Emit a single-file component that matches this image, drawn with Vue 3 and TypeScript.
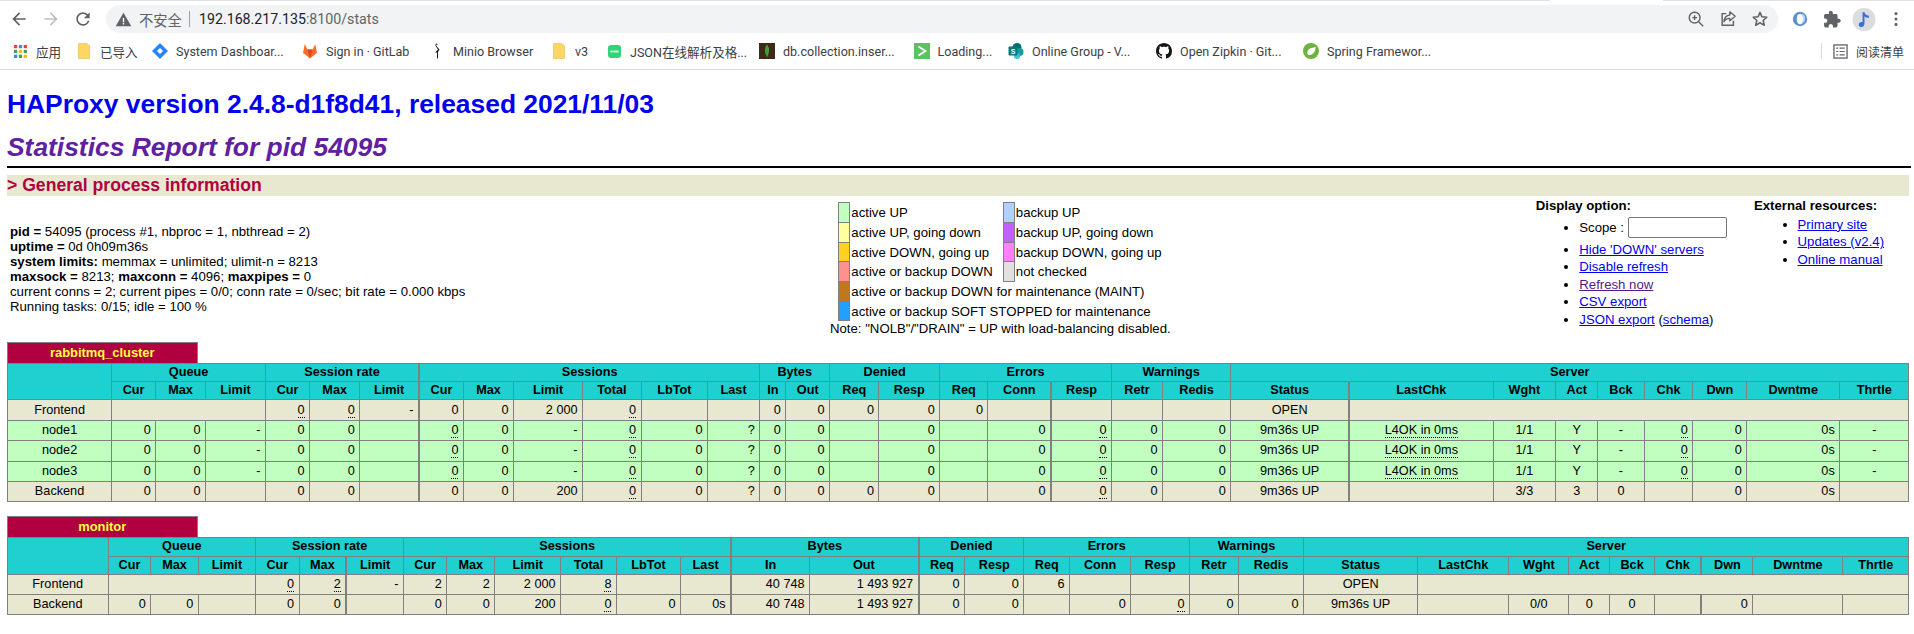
<script setup lang="ts">
interface Cell { text: string; u: boolean; center: boolean; span: number; thick: boolean }
interface Bookmark { label: string; icon: string; start: number }

const bookmarkData: Bookmark[] = [
  { label: '应用', icon: 'apps', start: 12 },
  { label: '已导入', icon: 'folder', start: 76 },
  { label: 'System Dashboar...', icon: 'jira', start: 152 },
  { label: 'Sign in · GitLab', icon: 'gitlab', start: 302 },
  { label: 'Minio Browser', icon: 'minio', start: 429 },
  { label: 'v3', icon: 'folder', start: 551 },
  { label: 'JSON在线解析及格...', icon: 'json', start: 606 },
  { label: 'db.collection.inser...', icon: 'mongo', start: 759 },
  { label: 'Loading...', icon: 'loading', start: 913.5 },
  { label: 'Online Group - V...', icon: 'share', start: 1008 },
  { label: 'Open Zipkin · Git...', icon: 'github', start: 1156 },
  { label: 'Spring Framewor...', icon: 'spring', start: 1303 }
]
const barEnd = 1821
const bookmarks = bookmarkData.map((b, i) => ({
  ...b,
  width: (i + 1 < bookmarkData.length ? bookmarkData[i + 1].start : barEnd) - b.start
}))

const groups: [string, number][] = [
  ['Queue', 3], ['Session rate', 3], ['Sessions', 6], ['Bytes', 2],
  ['Denied', 2], ['Errors', 3], ['Warnings', 2], ['Server', 9]
]
const subHeads = ['Cur', 'Max', 'Limit', 'Cur', 'Max', 'Limit', 'Cur', 'Max', 'Limit', 'Total', 'LbTot', 'Last',
  'In', 'Out', 'Req', 'Resp', 'Req', 'Conn', 'Resp', 'Retr', 'Redis', 'Status', 'LastChk', 'Wght', 'Act', 'Bck', 'Chk', 'Dwn', 'Dwntme', 'Thrtle']

function cell(token: string, col: number, thick: number[]): Cell {
  let text = token
  let u = false
  let center = false
  let span = 1
  if (token.startsWith('u:')) { u = true; text = token.slice(2) }
  else if (token.startsWith('c:')) { center = true; text = token.slice(2) }
  else if (token.startsWith('cu:')) { center = true; u = true; text = token.slice(3) }
  else if (token.startsWith('s')) { span = Number(token.slice(1)); text = '' }
  return { text, u, center, span, thick: thick.includes(col) }
}
function parseRow(tokens: string[], thick: number[]): Cell[] {
  let col = 0
  return tokens.map((t) => {
    const c = cell(t, col, thick)
    col += c.span
    return c
  })
}
function headCols(thick: number[]) {
  let col = 1
  const top = groups.map(([name, span]) => {
    const r = { name, span, thick: thick.includes(col) }
    col += span
    return r
  })
  const sub = subHeads.map((name, i) => ({ name, thick: thick.includes(i + 1) }))
  return { top, sub }
}
function widths(b: number[]): number[] {
  return b.slice(1).map((x, i) => x - b[i])
}

const node = (n: string) => ['c:' + n, '0', '0', '-', '0', '0', '', 'u:0', '0', '-', 'u:0', '0', '?', '0', '0', '', '0', '', '0', 'u:0', '0', '0',
  'c:9m36s UP', 'cu:L4OK in 0ms', 'c:1/1', 'c:Y', 'c:-', 'u:0', '0', '0s', 'c:-']

function buildTable(title: string, bounds: number[], thick: number[], raw: { cls: string; cells: string[] }[]) {
  return {
    title,
    cols: widths(bounds),
    width: bounds[bounds.length - 1] - bounds[0],
    head: headCols(thick),
    rows: raw.map((r) => ({ cls: r.cls, cells: parseRow(r.cells, thick) }))
  }
}

const tables = [
  buildTable('rabbitmq_cluster',
    [7.3, 111.4, 155.5, 205.3, 265.3, 309.4, 359.6, 418.8, 463.3, 513.5, 582.4, 641, 707.3, 759.6, 785.7, 829.4, 878.8, 939.6, 987.8, 1051, 1111.4, 1162.4, 1230.6, 1349, 1493, 1555.6, 1597.7, 1644, 1692.8, 1746.7, 1839.7, 1908.7],
    [7, 19, 23],
    [
      { cls: 'fe', cells: ['c:Frontend', 's3', 'u:0', 'u:0', '-', '0', '0', '2 000', 'u:0', '', '', '0', '0', '0', '0', '0', '', '', '', '', 'c:OPEN', 's8'] },
      { cls: 'up', cells: node('node1') },
      { cls: 'up', cells: node('node2') },
      { cls: 'up', cells: node('node3') },
      { cls: 'fe', cells: ['c:Backend', '0', '0', '', '0', '0', '', '0', '0', '200', 'u:0', '0', '?', '0', '0', '0', '0', '', '0', 'u:0', '0', '0', 'c:9m36s UP', '', 'c:3/3', 'c:3', 'c:0', '', '0', '0s', ''] }
    ]),
  buildTable('monitor',
    [7.3, 107.8, 150.6, 198, 255.5, 298.8, 346, 403.3, 446.5, 494.7, 560.4, 616.3, 680.4, 731, 809.4, 918.4, 964.5, 1023.7, 1069.4, 1130.6, 1189.4, 1238.4, 1303.4, 1417.7, 1508.7, 1568.7, 1609.5, 1654.4, 1701.3, 1752.8, 1842.6, 1908.7],
    [6, 13, 15, 28],
    [
      { cls: 'fe', cells: ['c:Frontend', 's3', 'u:0', 'u:2', '-', '2', '2', '2 000', 'u:8', '', '', '40 748', '1 493 927', '0', '0', '6', '', '', '', '', 'c:OPEN', 's8'] },
      { cls: 'fe', cells: ['c:Backend', '0', '0', '', '0', '0', '', '0', '0', '200', 'u:0', '0', '0s', '40 748', '1 493 927', '0', '0', '', '0', 'u:0', '0', '0', 'c:9m36s UP', '', 'c:0/0', 'c:0', 'c:0', '', '0', '', ''] }
    ])
]

const legendPairs = [
  ['#c0ffc0', 'active UP', '#b0d0ff', 'backup UP'],
  ['#ffffa0', 'active UP, going down', '#c060ff', 'backup UP, going down'],
  ['#ffd020', 'active DOWN, going up', '#ff80ff', 'backup DOWN, going up'],
  ['#ff9090', 'active or backup DOWN', '#e0e0e0', 'not checked']
]
const legendWide = [
  ['#c07820', 'active or backup DOWN for maintenance (MAINT)'],
  ['#20a0ff', 'active or backup SOFT STOPPED for maintenance']
]
</script>

<template>
  <div class="browser">
    <div class="tabstrip"><div class="strip-a"></div><div class="strip-tab"></div><div class="strip-b"></div></div>
    <header class="toolbar">
      <button class="nav" type="button" aria-label="back">
        <svg viewBox="0 0 24 24" width="20" height="20"><path fill="#5f6368" d="M20 11H7.83l5.59-5.59L12 4l-8 8 8 8 1.41-1.41L7.83 13H20v-2z"/></svg>
      </button>
      <button class="nav" type="button" aria-label="forward">
        <svg viewBox="0 0 24 24" width="20" height="20"><path fill="#bdc1c6" d="M4 11h12.17l-5.59-5.59L12 4l8 8-8 8-1.41-1.41L16.17 13H4v-2z"/></svg>
      </button>
      <button class="nav" type="button" aria-label="reload">
        <svg viewBox="0 0 24 24" width="20" height="20"><path fill="#5f6368" d="M17.65 6.35A7.958 7.958 0 0012 4c-4.42 0-7.99 3.58-7.99 8s3.57 8 7.99 8c3.73 0 6.84-2.55 7.73-6h-2.08A5.99 5.99 0 0112 18c-3.31 0-6-2.69-6-6s2.69-6 6-6c1.66 0 3.14.69 4.22 1.78L13 11h7V4l-2.35 2.35z"/></svg>
      </button>
      <div class="omni">
        <svg class="warn" viewBox="0 0 24 24" width="17" height="17"><path fill="#5f6368" d="M1 21.5h22L12 2.5z"/><path fill="#fff" d="M11 10h2v6h-2zM11 17h2v2h-2z"/></svg>
        <span class="insecure">不安全</span>
        <span class="omni-sep"></span>
        <span class="url">192.168.217.135<span class="url-dim">:8100/stats</span></span>
        <span class="omni-fill"></span>
        <svg class="omni-ic" viewBox="0 0 20 20" width="18" height="18"><circle cx="8.5" cy="8.5" r="6" fill="none" stroke="#5f6368" stroke-width="1.6"/><path d="M13 13l5 5M8.5 5.8v5.4M5.8 8.5h5.4" fill="none" stroke="#5f6368" stroke-width="1.6"/></svg>
        <svg class="omni-ic" viewBox="0 0 20 20" width="18" height="18"><path d="M8 4H3.5v13H16v-5" fill="none" stroke="#5f6368" stroke-width="1.6"/><path d="M12 2l6 5-6 5V9.3c-3 0-5 1-6.5 3.7C6 9 8 6 12 5.6z" fill="none" stroke="#5f6368" stroke-width="1.5" stroke-linejoin="round"/></svg>
        <svg class="omni-ic" viewBox="0 0 20 20" width="18" height="18"><path d="M10 2.6l2.2 5 5.4.5-4.1 3.6 1.3 5.3L10 14.2 5.2 17l1.3-5.3L2.4 8.1l5.4-.5z" fill="none" stroke="#5f6368" stroke-width="1.7" stroke-linejoin="round"/></svg>
      </div>
      <div class="tools">
        <svg viewBox="0 0 20 20" width="18" height="18"><circle cx="10" cy="10" r="8" fill="#5b92cf"/><ellipse cx="10" cy="10" rx="3.600" ry="5.800" fill="#fff"/><path d="M12 3.500c3 1.500 4 4 3.500 7-.4 2.500-2 4-3.500 5 1.800-3.500 2-8 0-12z" fill="#c5dbf1"/></svg>
        <svg viewBox="0 0 24 24" width="19" height="19"><path fill="#5f6368" d="M20.5 11H19V7c0-1.1-.9-2-2-2h-4V3.5C13 2.12 11.88 1 10.5 1S8 2.12 8 3.5V5H4c-1.1 0-1.99.9-1.99 2v3.8H3.5c1.49 0 2.7 1.21 2.7 2.7s-1.21 2.7-2.7 2.7H2V20c0 1.1.9 2 2 2h3.8v-1.5c0-1.49 1.21-2.7 2.7-2.7 1.49 0 2.7 1.21 2.7 2.7V22H17c1.1 0 2-.9 2-2v-4h1.5c1.38 0 2.5-1.12 2.5-2.5S21.88 11 20.5 11z"/></svg>
        <svg viewBox="0 0 24 24" width="23" height="23"><circle cx="12" cy="12" r="12" fill="#dadce0"/><path fill="#3b6fd8" d="M10.5 4.5h2c.4 2.5 2.6 3 4.5 3.5v2.4c-1.9-.3-3.3-.9-4.5-1.9v8c0 2.1-1.6 3.5-3.3 3.5S6.5 18.900 6.500 17.300c0-1.800 1.700-3 4-2.700z"/></svg>
        <svg viewBox="0 0 20 20" width="18" height="18"><circle cx="10" cy="4" r="1.700" fill="#5f6368"/><circle cx="10" cy="10" r="1.700" fill="#5f6368"/><circle cx="10" cy="16" r="1.700" fill="#5f6368"/></svg>
      </div>
    </header>

    <nav class="bookmarks">
      <div v-for="b in bookmarks" :key="b.start" class="bm" :style="{ width: b.width + 'px' }">
        <span class="bm-icon">
          <svg v-if="b.icon === 'apps'" viewBox="0 0 16 16" width="15" height="15">
            <rect x="1" y="1" width="3.500" height="3.500" fill="#ea4335"/><rect x="6.200" y="1" width="3.500" height="3.500" fill="#4285f4"/><rect x="11.400" y="1" width="3.500" height="3.500" fill="#ea4335"/>
            <rect x="1" y="6.200" width="3.500" height="3.500" fill="#34a853"/><rect x="6.200" y="6.200" width="3.500" height="3.500" fill="#fbbc04"/><rect x="11.400" y="6.200" width="3.500" height="3.500" fill="#34a853"/>
            <rect x="1" y="11.400" width="3.500" height="3.500" fill="#4285f4"/><rect x="6.200" y="11.400" width="3.500" height="3.500" fill="#34a853"/><rect x="11.400" y="11.400" width="3.500" height="3.500" fill="#fbbc04"/>
          </svg>
          <svg v-else-if="b.icon === 'folder'" viewBox="0 0 16 16" width="16" height="16"><path d="M2.500 0.500h8.500l2.500 2.500v12.500H2.500z" fill="#fdd663" stroke="#e9c46a" stroke-width="0.800"/></svg>
          <svg v-else-if="b.icon === 'jira'" viewBox="0 0 16 16" width="16" height="16"><path d="M8 0l8 8-8 8-8-8z" fill="#2684ff"/><path d="M8 5l3 3-3 3-3-3z" fill="#fff"/></svg>
          <svg v-else-if="b.icon === 'gitlab'" viewBox="0 0 16 16" width="16" height="16"><path d="M8 15.500L1 9.800 2.800 1l2.500 5.500h5.400L13.200 1 15 9.800z" fill="#fc6d26"/><path d="M8 15.500L5.300 6.500h5.400z" fill="#e24329"/></svg>
          <svg v-else-if="b.icon === 'minio'" viewBox="0 0 16 16" width="16" height="16"><path d="M8 0.500c-1.500 0-2 1.500-1.200 2.700L9 6.500 6 9.500h2v6.300l1-0.800V9l1.500-2.500-3-3.600C7 2 7.500 1.200 8.800 1.500z" fill="#1a1a1a"/></svg>
          <svg v-else-if="b.icon === 'json'" viewBox="0 0 16 16" width="15" height="15"><rect x="1" y="1" width="14" height="14" rx="3.500" fill="#2ed47a"/><rect x="3.500" y="7" width="9" height="2" fill="#d6f8e5"/></svg>
          <svg v-else-if="b.icon === 'mongo'" viewBox="0 0 16 16" width="16" height="16"><rect width="16" height="16" fill="#3f2a18"/><path d="M8 1.500c2.600 3 3 7 0 13-3-6-2.600-10 0-13z" fill="#3fa037"/></svg>
          <svg v-else-if="b.icon === 'loading'" viewBox="0 0 16 16" width="16" height="16"><rect width="16" height="16" fill="#5cc25f"/><path d="M4.500 3.500L11.500 8l-7 4.500" fill="none" stroke="#fff" stroke-width="1.800"/></svg>
          <svg v-else-if="b.icon === 'share'" viewBox="0 0 16 16" width="16" height="16"><circle cx="9" cy="4.500" r="4.500" fill="#036c70"/><circle cx="11.500" cy="9" r="4" fill="#1a9ba1"/><circle cx="9" cy="13" r="3" fill="#37c6d0"/><rect x="0.500" y="3.500" width="9" height="9" rx="1" fill="#03787c"/><text x="5" y="11" class="bm-s">S</text></svg>
          <svg v-else-if="b.icon === 'github'" viewBox="0 0 16 16" width="16" height="16"><path fill="#161614" d="M8 0C3.580 0 0 3.580 0 8c0 3.540 2.290 6.530 5.470 7.590.4.07.55-.17.55-.38 0-.19-.01-.82-.01-1.490-2.010.37-2.530-.49-2.690-.94-.09-.23-.48-.94-.82-1.130-.28-.15-.68-.52-.01-.53.63-.01 1.080.58 1.230.82.72 1.210 1.870.87 2.330.66.07-.52.28-.87.51-1.070-1.780-.2-3.640-.89-3.640-3.950 0-.87.31-1.590.82-2.150-.08-.2-.36-1.020.08-2.120 0 0 .67-.21 2.200.82.64-.18 1.320-.27 2-.27.68 0 1.360.09 2 .27 1.530-1.040 2.200-.82 2.200-.82.44 1.100.16 1.920.08 2.120.51.56.82 1.270.82 2.150 0 3.070-1.870 3.750-3.650 3.950.29.25.54.73.54 1.480 0 1.070-.01 1.930-.01 2.200 0 .21.15.46.55.38A8.013 8.013 0 0016 8c0-4.420-3.580-8-8-8z"/></svg>
          <svg v-else viewBox="0 0 16 16" width="16" height="16"><circle cx="8" cy="8" r="8" fill="#6db33f"/><path d="M12.500 3.500C12.800 9 9.500 12.500 5 12c-1.500-3 0-6.500 3.500-7 2-.3 3.200-.5 4-1.500z" fill="#fff"/></svg>
        </span>
        <span class="bm-label">{{ b.label }}</span>
      </div>
      <span class="bm-sep"></span>
      <svg class="reader" viewBox="0 0 16 16" width="15" height="15"><rect x="1" y="1" width="14" height="14" fill="none" stroke="#5f6368" stroke-width="1.400"/><path d="M3.500 4.500h2M7 4.500h5.500M3.500 8h2M7 8h5.500M3.500 11.500h2M7 11.500h5.500" stroke="#5f6368" stroke-width="1.300"/></svg>
      <span class="reader-label">阅读清单</span>
    </nav>

    <main class="page">
      <h1>HAProxy version 2.4.8-d1f8d41, released 2021/11/03</h1>
      <h2>Statistics Report for pid 54095</h2>
      <div class="rule"></div>
      <h3>&gt; General process information</h3>

      <section class="overview">
        <div class="info">
          <p><b>pid = </b>54095 (process #1, nbproc = 1, nbthread = 2)</p>
          <p><b>uptime = </b>0d 0h09m36s</p>
          <p><b>system limits:</b> memmax = unlimited; ulimit-n = 8213</p>
          <p><b>maxsock = </b>8213; <b>maxconn = </b>4096; <b>maxpipes = </b>0</p>
          <p>current conns = 2; current pipes = 0/0; conn rate = 0/sec; bit rate = 0.000 kbps</p>
          <p>Running tasks: 0/15; idle = 100 %</p>
        </div>

        <div class="legend">
          <table class="lgd">
            <tbody>
              <tr v-for="p in legendPairs" :key="p[1]">
                <td class="sw" :style="{ background: p[0] }"></td>
                <td class="lt">{{ p[1] }}</td>
                <td class="sw" :style="{ background: p[2] }"></td>
                <td class="lt">{{ p[3] }}</td>
              </tr>
              <tr v-for="p in legendWide" :key="p[1]">
                <td class="sw" :style="{ background: p[0] }"></td>
                <td class="lt" colspan="3">{{ p[1] }}</td>
              </tr>
            </tbody>
          </table>
          <div class="note">Note: "NOLB"/"DRAIN" = UP with load-balancing disabled.</div>
        </div>

        <div class="opts">
          <b>Display option:</b>
          <ul>
            <li class="scope">Scope : <input type="text" aria-label="Scope"></li>
            <li><a href="#">Hide 'DOWN' servers</a></li>
            <li><a href="#">Disable refresh</a></li>
            <li><a href="#" class="visited">Refresh now</a></li>
            <li><a href="#">CSV export</a></li>
            <li><a href="#">JSON export</a> (<a href="#">schema</a>)</li>
          </ul>
        </div>

        <div class="ext">
          <b>External resources:</b>
          <ul>
            <li><a href="#">Primary site</a></li>
            <li><a href="#">Updates (v2.4)</a></li>
            <li><a href="#">Online manual</a></li>
          </ul>
        </div>
      </section>

      <section v-for="t in tables" :key="t.title" class="proxy">
        <div class="pxname">{{ t.title }}</div>
        <table class="tbl" :style="{ width: t.width + 'px' }">
          <colgroup><col v-for="(w, i) in t.cols" :key="i" :style="{ width: w + 'px' }"></colgroup>
          <thead>
            <tr class="h1row">
              <th rowspan="2"></th>
              <th v-for="g in t.head.top" :key="g.name" :colspan="g.span" :class="{ thick: g.thick }">{{ g.name }}</th>
            </tr>
            <tr class="h2row">
              <th v-for="(s, i) in t.head.sub" :key="i" :class="{ thick: s.thick }">{{ s.name }}</th>
            </tr>
          </thead>
          <tbody>
            <tr v-for="(r, ri) in t.rows" :key="ri" :class="r.cls">
              <td v-for="(c, ci) in r.cells" :key="ci" :colspan="c.span" :class="{ ac: c.center, thick: c.thick }">
                <u v-if="c.u">{{ c.text }}</u>
                <template v-else>{{ c.text }}</template>
              </td>
            </tr>
          </tbody>
        </table>
      </section>
    </main>
  </div>
</template>

<style scoped>
.browser { width: 1914px; height: 634px; overflow: hidden; background: #fff; font-family: "Liberation Sans", Arial, sans-serif; color: #000; }

.tabstrip { display: flex; height: 1px; background: #fff; }
.strip-a { width: 1550px; background: #dee1e6; }
.strip-tab { width: 113px; background: #fff; }
.strip-b { flex: 1; background: #dee1e6; }

.toolbar { display: flex; align-items: center; height: 32px; padding: 4px 0 0 3px; box-sizing: border-box; }
.nav { flex: none; width: 32px; height: 28px; padding: 0; border: 0; background: none; display: flex; align-items: center; justify-content: center; }
.omni { flex: none; display: flex; align-items: center; width: 1672px; height: 28px; margin-left: 7px; padding: 0 0 0 9px; box-sizing: border-box; background: #f1f3f4; border-radius: 14px; font-family: "Noto Sans CJK SC", "Noto Sans", sans-serif; font-size: 14px; }
.warn { flex: none; }
.insecure { margin-left: 7px; color: #5f6368; font-size: 14.300px; width: 43px; white-space: nowrap; }
.omni-sep { width: 1px; height: 16px; margin: 0 9px 0 7px; background: #9aa0a6; }
.url { font-family: Roboto, "Noto Sans", sans-serif; font-size: 14.200px; color: #202124; white-space: nowrap; }
.url-dim { color: #5f6368; }
.omni-fill { flex: 1; }
.omni-ic { flex: none; margin-right: 14px; }
.omni-ic:last-child { margin-right: 9px; }
.tools { flex: none; display: flex; align-items: center; padding-left: 6px; }
.tools svg { flex: none; width: 32px; }

.bookmarks { display: flex; align-items: center; height: 37px; padding-left: 12px; box-sizing: border-box; border-bottom: 1px solid #dadce0; font-family: Roboto, "Noto Sans CJK SC", sans-serif; font-size: 12.550px; color: #3c4043; }
.bm { flex: none; display: flex; align-items: center; white-space: nowrap; overflow: hidden; }
.bm-icon { flex: none; width: 16px; height: 16px; margin-right: 8px; display: flex; align-items: center; justify-content: center; }
.bm-icon svg { flex: none; }
.bm-s { font: bold 7px "Liberation Sans", sans-serif; fill: #fff; text-anchor: middle; }
.bm-sep { flex: none; width: 1px; height: 16px; background: #dadce0; }
.reader { flex: none; margin-left: 11px; }
.reader-label { margin-left: 8px; font-family: "Noto Sans CJK SC", sans-serif; font-size: 12px; white-space: nowrap; color: #3c4043; }

.page { padding: 0 0 0 7px; font-size: 13.200px; line-height: 15px; }
h1 { margin: 0; padding-top: 18.500px; height: 30px; font-size: 26.400px; line-height: 30px; color: #0000ee; font-weight: bold; }
h2 { margin: 13px 0 0; font-size: 26.400px; line-height: 30px; font-weight: bold; font-style: italic; color: #6020a0; }
.rule { width: 1904px; height: 2px; margin-top: 4px; background: #000; }
h3 { width: 1902px; height: 21px; margin: 7px 0 0; font-size: 17.600px; line-height: 21px; font-weight: bold; color: #b00040; background: #e8e8d0; }

.overview { display: flex; height: 146px; }
.info { flex: none; width: 823px; padding: 28.500px 0 0 3px; box-sizing: border-box; }
.info p { margin: 0; }
.legend { flex: none; width: 705.700px; box-sizing: border-box; padding-top: 6.300px; }
.lgd { border-collapse: collapse; margin-left: 8.300px; table-layout: fixed; width: 327px; }
.lgd td { padding: 0; }
.lgd .sw { width: 10px; border: 1px solid gray; }
.lgd .lt { padding-left: 1px; width: 151.500px; white-space: nowrap; height: 19.500px; line-height: 15px; }
.lgd tr:first-child .lt { height: 20.500px; }
.note { white-space: nowrap; }
.opts { flex: none; width: 218.300px; padding-top: 2.500px; box-sizing: border-box; }
.ext { flex: 1; padding-top: 2.500px; }
ul { margin: 3.700px 0 0; padding: 0 0 0 43.600px; }
li { margin-top: 2.600px; }
li:first-child { margin-top: 0; }
li.scope { height: 22.400px; line-height: 22px; }
.ext li { margin-top: 2.500px; }
a { color: #0000ee; text-decoration: underline; }
a.visited { color: #551a8b; }
input { box-sizing: border-box; width: 99px; height: 21.500px; margin: 0; padding: 0 2px; border: 1px solid #767676; border-radius: 2px; background: #fff; vertical-align: top; }

.proxy + .proxy { margin-top: 13.500px; }
.pxname { width: 188.500px; height: 20.500px; border: 1px solid gray; border-bottom: 0; background: #b00040; color: #ffff40; font-weight: bold; font-size: 12.900px; line-height: 20px; text-align: center; }
.tbl { table-layout: fixed; border-collapse: collapse; font-size: 12.700px; line-height: 15px; }
.tbl th { padding: 0; border: 1px solid gray; background: #20d0d0; color: #000; font-weight: bold; text-align: center; overflow: hidden; white-space: nowrap; }
.h1row { height: 18.200px; }
.h2row { height: 18.200px; }
.tbl td { height: 20.400px; padding: 0 4.500px 0 0; box-sizing: border-box; border: 1px solid gray; text-align: right; white-space: nowrap; }
.tbl td.ac { text-align: center; padding: 0; }
.tbl .thick { border-left-width: 2px; }
.fe td { background: #e8e8d0; }
.up td { background: #c0ffc0; }
u { text-decoration: none; border-bottom: 1px dotted #000; }
</style>

<style>
html, body { margin: 0; padding: 0; background: #fff; overflow: hidden; }
</style>
